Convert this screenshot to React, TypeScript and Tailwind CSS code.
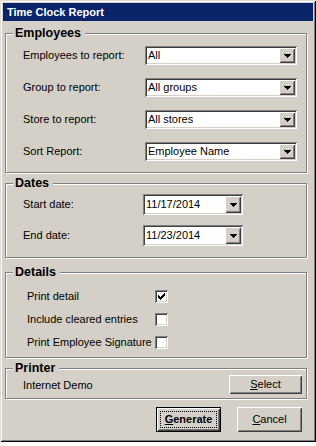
import React from 'react';

// classic 3D edges
const raised =
  'shadow-[inset_1px_1px_0_#fff,inset_-1px_-1px_0_#404040,inset_2px_2px_0_#d4d0c8,inset_-2px_-2px_0_#808080]';
const sunken =
  'shadow-[inset_1px_1px_0_#808080,inset_-1px_-1px_0_#fff,inset_2px_2px_0_#404040,inset_-2px_-2px_0_#d4d0c8]';

function DownArrow() {
  return (
    <svg width="7" height="4" viewBox="0 0 7 4" shapeRendering="crispEdges">
      <rect x="0" y="0" width="7" height="1" />
      <rect x="1" y="1" width="5" height="1" />
      <rect x="2" y="2" width="3" height="1" />
      <rect x="3" y="3" width="1" height="1" />
    </svg>
  );
}

function CheckMark() {
  const cols = [2, 3, 4, 3, 2, 1, 0];
  return (
    <svg width="7" height="7" viewBox="0 0 7 7" shapeRendering="crispEdges">
      {cols.map((y, x) => (
        <rect key={x} x={x} y={y} width="1" height="3" />
      ))}
    </svg>
  );
}

function Combo({ value, width, height }: { value: string; width: string; height: string }) {
  return (
    <div className={`flex ${width} ${height} bg-white p-[2px] ${sunken}`}>
      <div className="flex flex-1 items-center pl-[1px] text-[11px] leading-none">{value}</div>
      <div className={`flex w-[16px] items-center justify-center bg-[#d4d0c8] ${raised}`}>
        <DownArrow />
      </div>
    </div>
  );
}

function CheckBox({ checked }: { checked?: boolean }) {
  return (
    <div className={`flex h-[13px] w-[13px] items-center justify-center bg-white ${sunken}`}>
      {checked && <CheckMark />}
    </div>
  );
}

function Group({
  title,
  className,
  children,
}: {
  title: string;
  className: string;
  children: React.ReactNode;
}) {
  return (
    <fieldset
      className={`ml-[2px] w-[302px] border border-[#808080] shadow-[inset_1px_1px_0_#fff,1px_1px_0_#fff] ${className}`}
    >
      <legend className="ml-[7px] bg-[#d4d0c8] pl-[2px] pr-[4px] text-[12.5px] font-bold leading-[14px]">
        {title}
      </legend>
      {children}
    </fieldset>
  );
}

function Button({
  children,
  width,
  height,
  isDefault,
}: {
  children: React.ReactNode;
  width: string;
  height: string;
  isDefault?: boolean;
}) {
  if (isDefault) {
    return (
      <div className={`flex ${width} ${height} border border-black`}>
        <div className={`flex flex-1 p-[3px] ${raised}`}>
          <div className="flex flex-1 items-center justify-center border border-dotted border-black font-bold">
            {children}
          </div>
        </div>
      </div>
    );
  }
  return (
    <div className={`flex ${width} ${height} items-center justify-center ${raised}`}>{children}</div>
  );
}

export default function App() {
  const employeeRows = [
    ['Employees to report:', 'All'],
    ['Group to report:', 'All groups'],
    ['Store to report:', 'All stores'],
    ['Sort Report:', 'Employee Name'],
  ];
  const dateRows = [
    ['Start date:', '11/17/2014'],
    ['End date:', '11/23/2014'],
  ];
  const detailRows: [string, boolean][] = [
    ['Print detail', true],
    ['Include cleared entries', false],
    ['Print Employee Signature', false],
  ];

  return (
    <div className="h-[446px] w-[316px] bg-white font-['Liberation_Sans',Arial,sans-serif] text-[11px] text-black">
      <div className="flex h-[442px] w-[316px] flex-col bg-[#d4d0c8] px-[3px] pt-[3px] shadow-[inset_1px_1px_0_#dcdad5,inset_-1px_-1px_0_#000,inset_2px_2px_0_#fff,inset_-2px_-2px_0_#808080]">
        {/* Title bar */}
        <div className="flex h-[18px] items-center bg-[#0a246a] pl-[4px] text-[11px] font-bold text-white">
          Time Clock Report
        </div>

        {/* Employees */}
        <Group title="Employees" className="mt-[5px] pb-[11px] pt-[6px]">
          <div className="flex flex-col gap-[13px] pl-[17px]">
            {employeeRows.map(([label, value]) => (
              <div key={label} className="flex items-center">
                <span className="w-[122px]">{label}</span>
                <Combo value={value} width="w-[152px]" height="h-[19px]" />
              </div>
            ))}
          </div>
        </Group>

        {/* Dates */}
        <Group title="Dates" className="mt-[3px] pb-[11px] pt-[4px]">
          <div className="flex flex-col gap-[10px] pl-[17px]">
            {dateRows.map(([label, value]) => (
              <div key={label} className="flex items-center">
                <span className="w-[120px]">{label}</span>
                <Combo value={value} width="w-[100px]" height="h-[21px]" />
              </div>
            ))}
          </div>
        </Group>

        {/* Details */}
        <Group title="Details" className="mt-[7px] pb-[8px] pt-[11px]">
          <div className="flex flex-col gap-[10px] pl-[21px]">
            {detailRows.map(([label, checked]) => (
              <div key={label} className="flex h-[13px] items-center">
                <span className="w-[128px] whitespace-nowrap">{label}</span>
                <CheckBox checked={checked} />
              </div>
            ))}
          </div>
        </Group>

        {/* Printer */}
        <Group title="Printer" className="mt-[3px] pb-[4px]">
          <div className="flex items-start justify-between pl-[17px] pr-[4px]">
            <span className="pt-[2px]">Internet Demo</span>
            <Button width="w-[73px]" height="h-[19px]">
              <span>
                <span className="underline">S</span>elect
              </span>
            </Button>
          </div>
        </Group>

        {/* Actions */}
        <div className="mt-[8px] flex justify-end gap-[16px] pr-[11px]">
          <Button width="w-[65px]" height="h-[25px]" isDefault>
            <span>
              <span className="underline">G</span>enerate
            </span>
          </Button>
          <Button width="w-[65px]" height="h-[25px]">
            <span>
              <span className="underline">C</span>ancel
            </span>
          </Button>
        </div>
      </div>
    </div>
  );
}
